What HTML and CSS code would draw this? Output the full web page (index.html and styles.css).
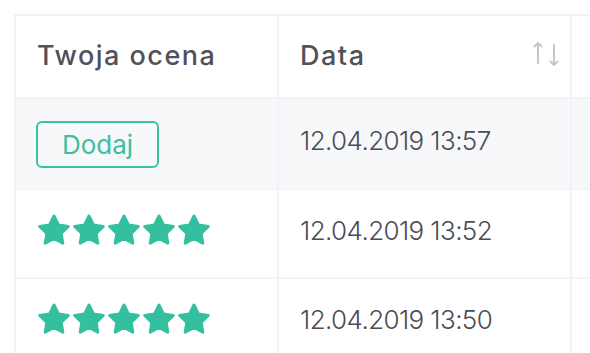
FILE: index.html
```html
<!DOCTYPE html>
<html lang="pl">
<head>
<meta charset="utf-8">
<link rel="stylesheet" href="styles.css">
</head>
<body>
<div class="table">
  <div class="cell head">Twoja ocena</div>
  <div class="cell head head-sort"><span>Data</span>
    <svg class="sort" width="24" height="24" viewBox="0 0 24 24" fill="none" stroke="#c6c6c8" stroke-width="2" stroke-linecap="round" stroke-linejoin="round">
      <path d="M3 21V1M-0.5 4.5L3 1L6.5 4.5"/>
      <path d="M19 3V23M15.5 19.5L19 23L22.5 19.5"/>
    </svg>
  </div>
  <div class="cell edge"></div>

  <div class="cell alt"><button class="add">Dodaj</button></div>
  <div class="cell alt date">12.04.2019 13:57</div>
  <div class="cell alt edge"></div>

  <div class="cell"><div class="stars">
    <svg class="star" viewBox="0 0 32 31"><polygon points="16,2 20.41,10.93 30.27,12.36 23.13,19.32 24.82,29.14 16,24.5 7.18,29.14 8.87,19.32 1.73,12.36 11.59,10.93"/></svg>
    <svg class="star" viewBox="0 0 32 31"><polygon points="16,2 20.41,10.93 30.27,12.36 23.13,19.32 24.82,29.14 16,24.5 7.18,29.14 8.87,19.32 1.73,12.36 11.59,10.93"/></svg>
    <svg class="star" viewBox="0 0 32 31"><polygon points="16,2 20.41,10.93 30.27,12.36 23.13,19.32 24.82,29.14 16,24.5 7.18,29.14 8.87,19.32 1.73,12.36 11.59,10.93"/></svg>
    <svg class="star" viewBox="0 0 32 31"><polygon points="16,2 20.41,10.93 30.27,12.36 23.13,19.32 24.82,29.14 16,24.5 7.18,29.14 8.87,19.32 1.73,12.36 11.59,10.93"/></svg>
    <svg class="star" viewBox="0 0 32 31"><polygon points="16,2 20.41,10.93 30.27,12.36 23.13,19.32 24.82,29.14 16,24.5 7.18,29.14 8.87,19.32 1.73,12.36 11.59,10.93"/></svg>
  </div></div>
  <div class="cell date">12.04.2019 13:52</div>
  <div class="cell edge"></div>

  <div class="cell last"><div class="stars">
    <svg class="star" viewBox="0 0 32 31"><polygon points="16,2 20.41,10.93 30.27,12.36 23.13,19.32 24.82,29.14 16,24.5 7.18,29.14 8.87,19.32 1.73,12.36 11.59,10.93"/></svg>
    <svg class="star" viewBox="0 0 32 31"><polygon points="16,2 20.41,10.93 30.27,12.36 23.13,19.32 24.82,29.14 16,24.5 7.18,29.14 8.87,19.32 1.73,12.36 11.59,10.93"/></svg>
    <svg class="star" viewBox="0 0 32 31"><polygon points="16,2 20.41,10.93 30.27,12.36 23.13,19.32 24.82,29.14 16,24.5 7.18,29.14 8.87,19.32 1.73,12.36 11.59,10.93"/></svg>
    <svg class="star" viewBox="0 0 32 31"><polygon points="16,2 20.41,10.93 30.27,12.36 23.13,19.32 24.82,29.14 16,24.5 7.18,29.14 8.87,19.32 1.73,12.36 11.59,10.93"/></svg>
    <svg class="star" viewBox="0 0 32 31"><polygon points="16,2 20.41,10.93 30.27,12.36 23.13,19.32 24.82,29.14 16,24.5 7.18,29.14 8.87,19.32 1.73,12.36 11.59,10.93"/></svg>
  </div></div>
  <div class="cell date last">12.04.2019 13:50</div>
  <div class="cell edge"></div>
</div>
</body>
</html>
```
FILE: styles.css
```css
html, body {
  margin: 0;
  padding: 0;
  background: #ffffff;
  overflow: hidden;
  width: 590px;
  height: 353px;
}
body {
  padding: 14px 0 0 14px;
  box-sizing: border-box;
  font-family: Inter, "Open Sans", sans-serif;
}
.table {
  display: grid;
  grid-template-columns: 261px 291px 18px;
  grid-template-rows: 81px 89px 87px 74px;
  gap: 2px;
  padding: 2px 0 0 2px;
  background: #f2f3f7;
  width: max-content;
}
.cell {
  background: #ffffff;
  display: flex;
  align-items: center;
  padding-left: 21px;
}
.cell.edge {
  padding-left: 0;
}
.cell.alt {
  background: #f7f8fa;
}
.head {
  font-size: 27px;
  font-weight: 500;
  letter-spacing: 1.5px;
  color: #50515b;
  padding-bottom: 2px;
}
.head-sort {
  justify-content: space-between;
  padding-right: 11px;
}
.sort {
  overflow: visible;
  margin-top: -3px;
}
.date {
  font-size: 26px;
  font-weight: 300;
  color: #4b4c56;
  letter-spacing: -0.6px;
  padding-bottom: 6px;
}
.add {
  font-family: inherit;
  width: 123px;
  height: 47px;
  margin-left: -1px;
  margin-top: 2px;
  border: 2px solid #3cc19f;
  border-radius: 6px;
  background: transparent;
  color: #3cbf9e;
  font-size: 26px;
  font-weight: 400;
  padding: 0;
}
.stars {
  display: flex;
  gap: 3px;
  margin-left: 1px;
  margin-bottom: 8px;
}
.cell.last {
  align-items: flex-start;
  padding-top: 24px;
  padding-bottom: 0;
}
.cell.last .stars {
  margin-bottom: 0;
}
.cell.date.last {
  padding-top: 25px;
}
.star {
  width: 32px;
  height: 31px;
  fill: #34bf9f;
  stroke: #34bf9f;
  stroke-width: 3;
  stroke-linejoin: round;
}
```
